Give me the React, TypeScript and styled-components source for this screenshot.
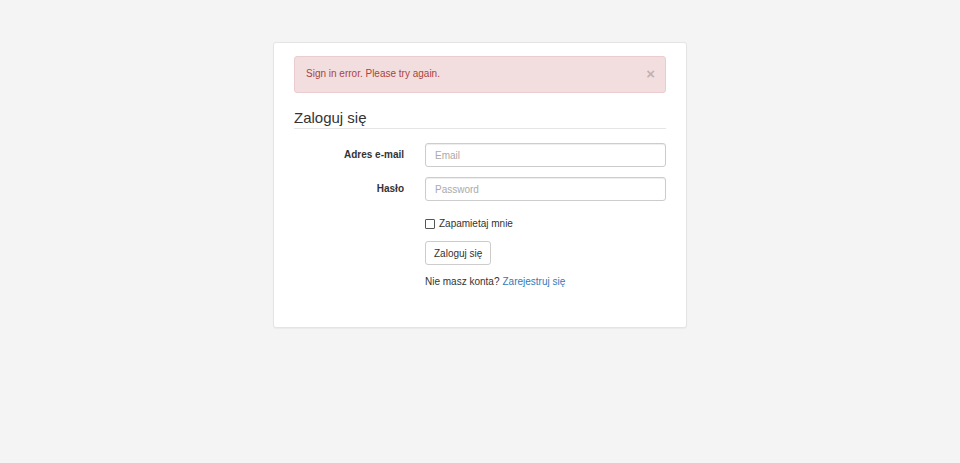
import React from 'react';
import styled, { createGlobalStyle } from 'styled-components';

const GlobalStyle = createGlobalStyle`
  html, body {
    margin: 0;
    padding: 0;
    background: #f4f4f4;
  }
  body {
    font-family: "Liberation Sans", Arial, Helvetica, sans-serif;
    font-size: 10px;
    line-height: 1.42857;
    color: #333;
  }
  * { box-sizing: border-box; }
`;

const Page = styled.div`
  min-height: 463px;
  display: flex;
  justify-content: center;
  align-items: flex-start;
  padding-top: 42px;
`;

const Card = styled.div`
  width: 414px;
  background: #fff;
  border: 1px solid #e4e4e4;
  border-radius: 3px;
  box-shadow: 0 1px 1px rgba(0, 0, 0, 0.04);
  padding: 13px 20px 37px;
`;

const Alert = styled.div`
  display: flex;
  align-items: center;
  justify-content: space-between;
  height: 37px;
  padding: 0 10px 0 11px;
  background: #f2dede;
  border: 1px solid #ebccd1;
  border-radius: 3px;
  color: #a94442;
  margin-bottom: 15px;
`;

const Close = styled.button`
  border: 0;
  background: transparent;
  padding: 0;
  font-family: inherit;
  font-size: 15px;
  font-weight: bold;
  line-height: 1;
  color: #000;
  opacity: 0.2;
  cursor: pointer;
  margin-top: -2px;
`;

const Legend = styled.div`
  font-size: 15px;
  line-height: 20px;
  color: #333;
  border-bottom: 1px solid #e5e5e5;
  margin-bottom: 14px;
`;

const Form = styled.form`
  display: grid;
  grid-template-columns: 110px 241px;
  column-gap: 21px;
  row-gap: 10px;
  align-items: center;
`;

const Label = styled.label`
  text-align: right;
  font-weight: bold;
  color: #333;
`;

const Input = styled.input`
  height: 24px;
  width: 100%;
  border: 1px solid #ccc;
  border-radius: 3px;
  padding: 0 9px;
  font-family: inherit;
  font-size: 10px;
  color: #555;
  box-shadow: inset 0 1px 1px rgba(0, 0, 0, 0.075);
  outline: none;
  &::placeholder { color: #aaa; }
`;

const Field = styled.div<{ $top?: number }>`
  grid-column: 2;
  margin-top: ${(p) => p.$top ?? 0}px;
  display: flex;
  align-items: center;
`;

const Box = styled.span`
  width: 10px;
  height: 10px;
  border: 1px solid #555;
  border-radius: 1px;
  background: #fff;
  margin-right: 4px;
`;

const Button = styled.button`
  height: 24px;
  padding: 0 8px;
  border: 1px solid #ccc;
  border-radius: 3px;
  background: #fff;
  color: #333;
  font-family: inherit;
  font-size: 10px;
  cursor: pointer;
`;

const Link = styled.a`
  color: #337ab7;
  text-decoration: none;
  margin-left: 3px;
`;

export default function App() {
  return (
    <>
      <GlobalStyle />
      <Page>
        <Card>
          <Alert>
            <span>Sign in error. Please try again.</span>
            <Close type="button">×</Close>
          </Alert>
          <Legend>Zaloguj się</Legend>
          <Form onSubmit={(e) => e.preventDefault()}>
            <Label>Adres e-mail</Label>
            <Input type="email" placeholder="Email" />
            <Label>Hasło</Label>
            <Input type="password" placeholder="Password" />
            <Field $top={6}>
              <Box />
              <span>Zapamietaj mnie</span>
            </Field>
            <Field>
              <Button type="submit">Zaloguj się</Button>
            </Field>
            <Field>
              <span>Nie masz konta?</span>
              <Link href="#">Zarejestruj się</Link>
            </Field>
          </Form>
        </Card>
      </Page>
    </>
  );
}
